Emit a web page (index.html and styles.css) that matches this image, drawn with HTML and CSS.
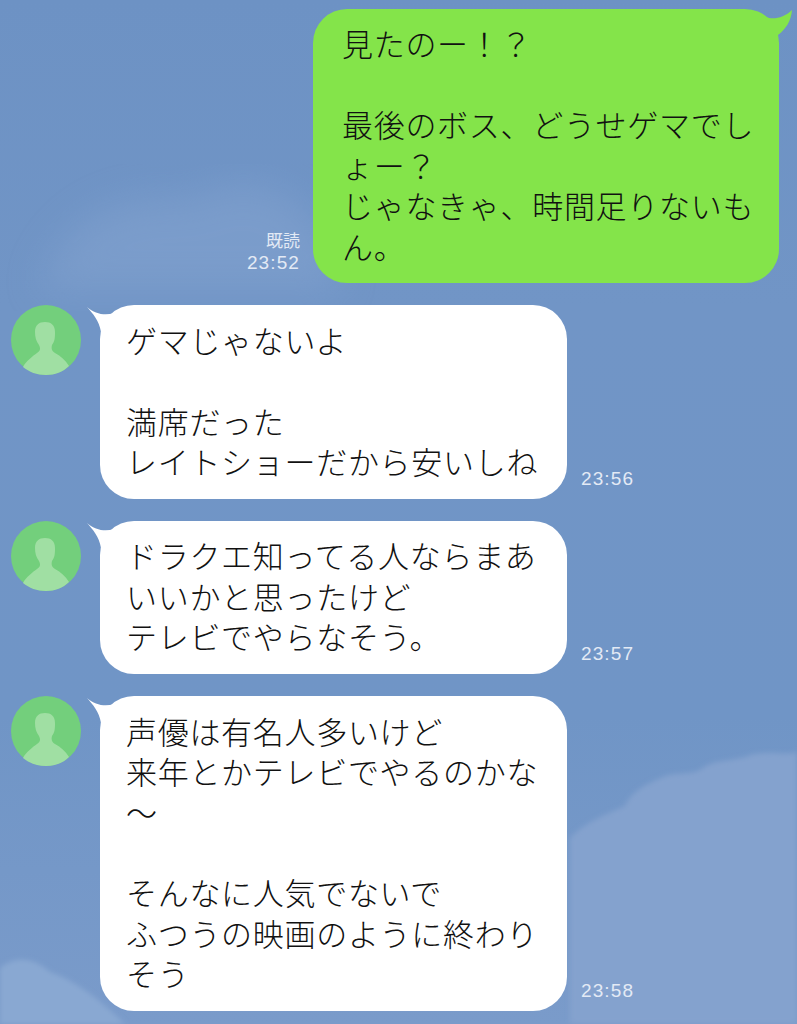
FILE: index.html
```html
<!DOCTYPE html>
<html lang="ja">

<head>
  <meta charset="utf-8">
  <title>LINE</title>
  <link rel="stylesheet" href="styles.css">
</head>

<body>
  <!-- Wallpaper clouds -->
  <svg class="clouds" viewBox="0 0 797 1024" aria-hidden="true">
    <defs>
      <filter id="soft" x="-20%" y="-20%" width="140%" height="140%"><feGaussianBlur stdDeviation="18"/></filter>
      <filter id="edge" x="-10%" y="-10%" width="120%" height="120%"><feGaussianBlur stdDeviation="2.5"/></filter>
    </defs>
    <path class="cloud-soft" filter="url(#soft)" d="M40 290C60 220 120 190 190 200C250 165 330 190 340 290Z"/>
    <path class="cloud-main" filter="url(#edge)" d="M570 838C585 822 605 815 625 806C632 790 648 784 665 776C680 772 690 775 700 770C715 758 735 762 750 755C770 750 785 756 797 752V1024H570Z"/>
    <path class="cloud-low" filter="url(#edge)" d="M0 968C15 955 35 958 50 972C75 980 100 1000 125 1024H0Z"/>
  </svg>

  <main class="chat">
    <div class="row row-me">
      <div class="meta">
        <span class="read">既読</span>
        <span class="time">23:52</span>
      </div>
      <div class="bubble bubble-me">
        <svg class="tail tail-me" viewBox="0 0 34 30" aria-hidden="true"><path d="M6 8C13 11 24 9 32 1C31 12 26 20 18 26H6Z"/></svg>
        見たのー！？<br><br>最後のボス、どうせゲマでし<br>ょー？<br>じゃなきゃ、時間足りないも<br>ん。
      </div>
    </div>

    <div class="row row-them">
      <svg class="avatar" viewBox="0 0 70 70" aria-hidden="true">
        <circle cx="35" cy="35" r="35" fill="#73cf7c"/>
        <path fill="#a0dfa3" d="M34 17C40 17 44 20 44 27C44 32 44 36 41 40C40 44 41 46 44 48C50 51 54 55 58 61C52 67 44 70 35 70C26 70 18 67 12 62C15 56 22 51 26 48C29 46 30 44 28 40C25 36 24 32 24 27C24 20 28 17 34 17Z"/>
      </svg>
      <div class="bubble bubble-them">
        <svg class="tail tail-them" viewBox="0 0 44 26" aria-hidden="true"><path d="M0 1C8 8 18 10 27 7C32 4 37 0 44 0V26H14C12 14 6 8 0 1Z"/></svg>
        ゲマじゃないよ<br><br>満席だった<br>レイトショーだから安いしね
      </div>
      <span class="time">23:56</span>
    </div>

    <div class="row row-them">
      <svg class="avatar" viewBox="0 0 70 70" aria-hidden="true">
        <circle cx="35" cy="35" r="35" fill="#73cf7c"/>
        <path fill="#a0dfa3" d="M34 17C40 17 44 20 44 27C44 32 44 36 41 40C40 44 41 46 44 48C50 51 54 55 58 61C52 67 44 70 35 70C26 70 18 67 12 62C15 56 22 51 26 48C29 46 30 44 28 40C25 36 24 32 24 27C24 20 28 17 34 17Z"/>
      </svg>
      <div class="bubble bubble-them">
        <svg class="tail tail-them" viewBox="0 0 44 26" aria-hidden="true"><path d="M0 1C8 8 18 10 27 7C32 4 37 0 44 0V26H14C12 14 6 8 0 1Z"/></svg>
        ドラクエ知ってる人ならまあ<br>いいかと思ったけど<br>テレビでやらなそう。
      </div>
      <span class="time">23:57</span>
    </div>

    <div class="row row-them">
      <svg class="avatar" viewBox="0 0 70 70" aria-hidden="true">
        <circle cx="35" cy="35" r="35" fill="#73cf7c"/>
        <path fill="#a0dfa3" d="M34 17C40 17 44 20 44 27C44 32 44 36 41 40C40 44 41 46 44 48C50 51 54 55 58 61C52 67 44 70 35 70C26 70 18 67 12 62C15 56 22 51 26 48C29 46 30 44 28 40C25 36 24 32 24 27C24 20 28 17 34 17Z"/>
      </svg>
      <div class="bubble bubble-them">
        <svg class="tail tail-them" viewBox="0 0 44 26" aria-hidden="true"><path d="M0 1C8 8 18 10 27 7C32 4 37 0 44 0V26H14C12 14 6 8 0 1Z"/></svg>
        声優は有名人多いけど<br>来年とかテレビでやるのかな<br>〜<br><br>そんなに人気でないで<br>ふつうの映画のように終わり<br>そう
      </div>
      <span class="time">23:58</span>
    </div>
  </main>
</body>
</html>
```

FILE: styles.css
```css
/* Boiler Plate */
*, ::after, ::before {
  box-sizing: border-box;
  margin: 0;
  padding: 0;
}
html {
  background: #7095c6;
}
body {
  position: relative;
  width: 797px;
  height: 1024px;
  overflow: hidden;
  font-family: "Noto Sans CJK JP", "Noto Sans", sans-serif;
  color: #111;
  background: linear-gradient(180deg, #6d92c4 0%, #7195c6 30%, #7095c6 70%, #7a9bca 100%);
}

/* Wallpaper */
.clouds {
  position: absolute;
  top: 0;
  left: 0;
  width: 797px;
  height: 1024px;
}
.cloud-soft {
  fill: #85a4d0;
  opacity: 0.5;
}
.cloud-main {
  fill: #84a2ce;
}
.cloud-low {
  fill: #89a8d2;
}

/* Rows */
.chat {
  position: relative;
  display: flex;
  flex-direction: column;
  gap: 22.3px;
  padding: 9px 18px 0 11px;
}
.row {
  display: flex;
  align-items: flex-end;
}
.row-me {
  justify-content: flex-end;
}
.row-them {
  align-items: flex-start;
}

/* Bubbles */
.bubble {
  position: relative;
  border-radius: 34px;
  font-size: 31px;
  font-weight: 300;
  letter-spacing: 0.7px;
  white-space: nowrap;
}
.bubble-me {
  width: 466px;
  padding: 14px 0 16.4px 29px;
  line-height: 40.6px;
  background: #84e44a;
}
.bubble-them {
  width: 467px;
  margin-left: 19px;
  padding: 14.5px 0 17.3px 26px;
  line-height: 40.4px;
  background: #fff;
}
.tail {
  position: absolute;
}
.tail-me {
  top: 0;
  right: -15px;
  width: 34px;
  height: 30px;
  fill: #84e44a;
}
.tail-them {
  top: 1px;
  left: -13px;
  width: 44px;
  height: 26px;
  fill: #fff;
}

/* Avatar */
.avatar {
  flex: none;
  width: 70px;
  height: 70px;
}

/* Meta */
.meta {
  display: flex;
  flex-direction: column;
  align-items: flex-end;
  margin-right: 13px;
  padding-bottom: 8px;
}
.read {
  font-size: 17px;
  line-height: 23px;
  color: #e3eaf5;
}
.time {
  font-family: "Liberation Sans", sans-serif;
  font-size: 19px;
  line-height: 24px;
  letter-spacing: 1.1px;
  color: #e3eaf5;
}
.row-them .time {
  align-self: flex-end;
  margin-left: 14px;
  padding-bottom: 8px;
}
```
